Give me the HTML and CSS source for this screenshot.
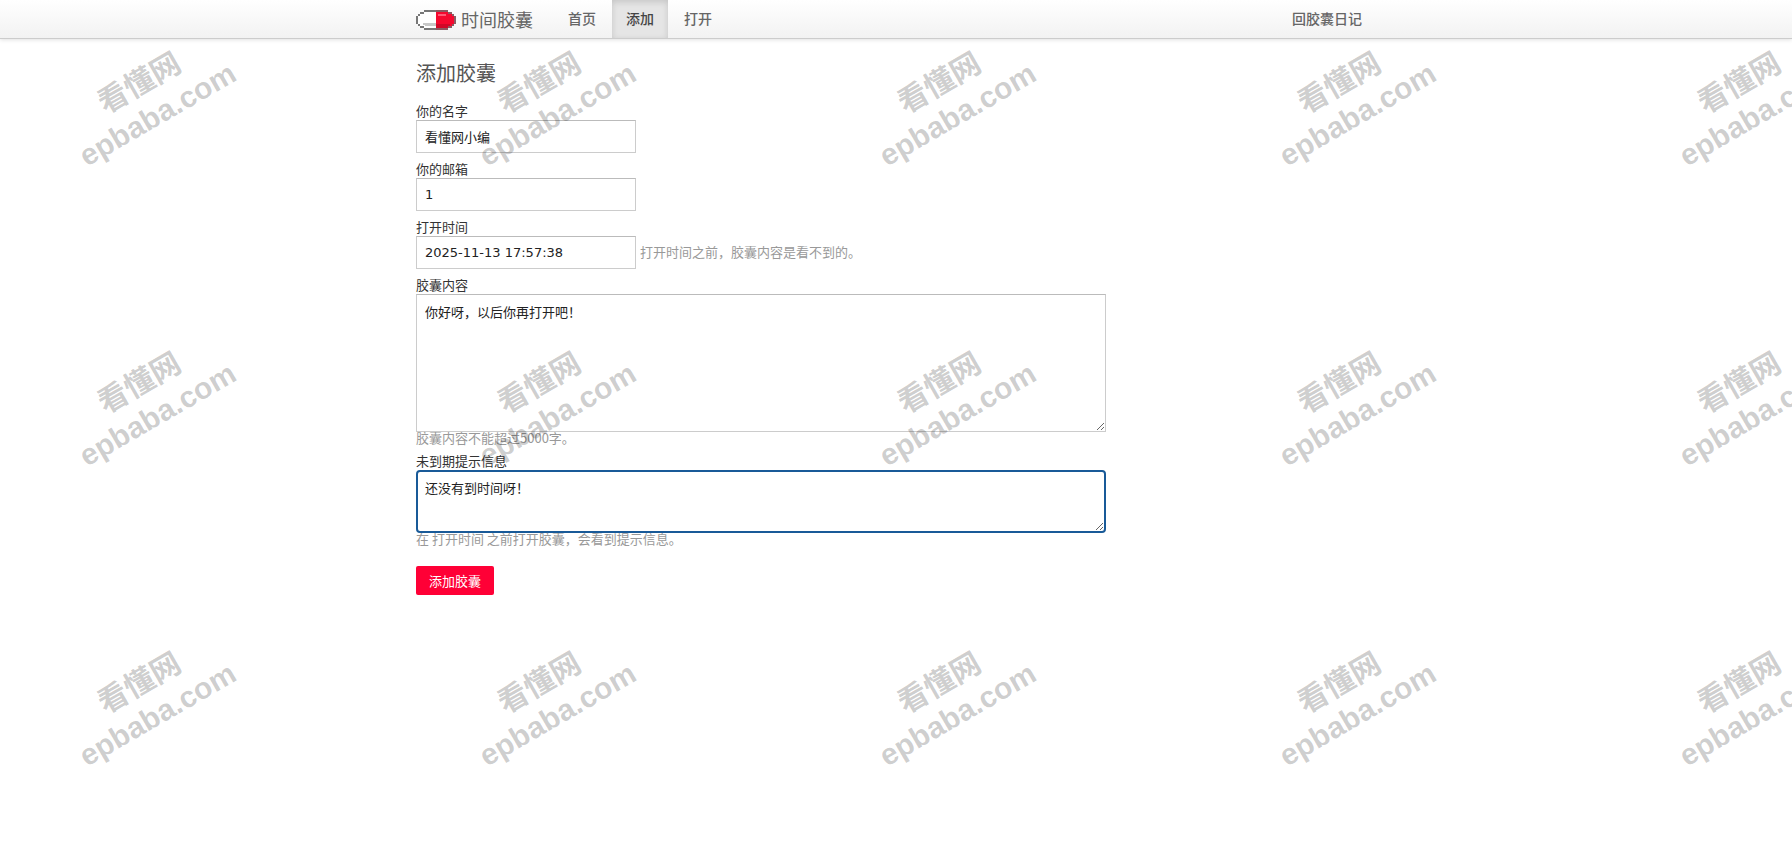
FILE: index.html
```html
<!DOCTYPE html>
<html lang="zh-CN">
<head>
    <meta charset="UTF-8">
    <meta name="viewport" content="width=device-width, initial-scale=1.0">
    <title>时间胶囊</title>
    <link rel="stylesheet" href="styles.css">
</head>
<body>
    <header class="navbar">
        <div class="container navbar-inner">
            <a class="brand" href="#">
                <svg class="brand-icon" width="40" height="20" viewBox="0 0 40 20" shape-rendering="crispEdges" aria-hidden="true">
                    <path fill="#fff" d="M8 2h12v16H8v-2H4v-2H2V6h2V4h4z"/>
                    <path fill="#f5082e" d="M20 2h12v2h4v2h2v8h-2v2h-4v2H20z"/>
                    <path fill="#c8c8c8" d="M7 13h13v3H9v-1H7z"/>
                    <path fill="#d00828" d="M20 14h14v2h-2v2H20z"/>
                    <path fill="#ff5a76" d="M22 4h8v2h-8z"/>
                    <path fill="#777" d="M8 0h12v2H8zM4 2h4v2H4zM2 4h2v2H2zM0 6h2v8H0zM2 14h2v2H2zM4 16h4v2H4zM8 18h12v2H8z"/>
                    <path fill="#8c5a62" d="M20 0h12v2H20zM32 2h4v2h-4zM36 4h2v2h-2zM38 6h2v8h-2zM36 14h2v2h-2zM32 16h4v2h-4zM20 18h12v2H20z"/>
                </svg>
                时间胶囊
            </a>
            <nav class="nav">
                <a href="#">首页</a>
                <a class="active" href="#">添加</a>
                <a href="#">打开</a>
            </nav>
            <a class="nav-back" href="#">回胶囊日记</a>
        </div>
    </header>

    <main class="container">
        <h1>添加胶囊</h1>
        <form>
            <div class="field">
                <label for="name">你的名字</label>
                <input type="text" id="name" value="看懂网小编">
            </div>
            <div class="field">
                <label for="email">你的邮箱</label>
                <input type="text" id="email" value="1">
            </div>
            <div class="field">
                <label for="open-time">打开时间</label>
                <div class="field-row">
                    <input type="text" id="open-time" value="2025-11-13 17:57:38">
                    <span class="help">打开时间之前，胶囊内容是看不到的。</span>
                </div>
            </div>
            <div class="field">
                <label for="content">胶囊内容</label>
                <textarea class="content" id="content">你好呀，以后你再打开吧！</textarea>
                <p class="help">胶囊内容不能超过5000字。</p>
            </div>
            <div class="field">
                <label for="tip">未到期提示信息</label>
                <textarea class="tip" id="tip">还没有到时间呀！</textarea>
                <p class="help">在 打开时间 之前打开胶囊，会看到提示信息。</p>
            </div>
            <button class="btn" type="submit">添加胶囊</button>
        </form>
    </main>

    <!-- Watermark layer over the whole page -->
    <div class="watermark" aria-hidden="true">
        <div class="mark">看懂网<br>epbaba.com</div>
        <div class="mark">看懂网<br>epbaba.com</div>
        <div class="mark">看懂网<br>epbaba.com</div>
        <div class="mark">看懂网<br>epbaba.com</div>
        <div class="mark">看懂网<br>epbaba.com</div>
        <div class="mark">看懂网<br>epbaba.com</div>
        <div class="mark">看懂网<br>epbaba.com</div>
        <div class="mark">看懂网<br>epbaba.com</div>
        <div class="mark">看懂网<br>epbaba.com</div>
        <div class="mark">看懂网<br>epbaba.com</div>
        <div class="mark">看懂网<br>epbaba.com</div>
        <div class="mark">看懂网<br>epbaba.com</div>
        <div class="mark">看懂网<br>epbaba.com</div>
        <div class="mark">看懂网<br>epbaba.com</div>
        <div class="mark">看懂网<br>epbaba.com</div>
    </div>
</body>
</html>
```
FILE: styles.css
```css
* {
    box-sizing: border-box;
}

body {
    margin: 0;
    font-family: "Noto Sans CJK SC", sans-serif;
    font-size: 13px;
    line-height: 18px;
    color: #333;
    background-color: #fff;
}

.container {
    max-width: 960px;
    margin: 0 auto;
}

.navbar {
    background: linear-gradient(#fff, #f2f2f2);
    border-bottom: 1px solid #ccc;
    box-shadow: 0 1px 4px rgba(0, 0, 0, 0.12);
}

.navbar-inner {
    display: flex;
    height: 38px;
    line-height: 36px;
}

.navbar a {
    color: #666;
    text-decoration: none;
}

.brand {
    display: flex;
    align-items: center;
    gap: 5px;
    margin-right: 21px;
    font-size: 18px;
}

.brand-icon {
    margin-top: 2px;
}

.nav {
    display: flex;
    gap: 2px;
}

.nav a,
.nav-back {
    padding: 0 14px;
    font-size: 14px;
    font-weight: 500;
}

.navbar .active {
    color: #444;
    background-color: #e5e5e5;
    box-shadow: inset 0 2px 6px rgba(0, 0, 0, 0.14);
}

.nav-back {
    margin-left: auto;
}

h1 {
    margin: 22px 0 17px;
    font-size: 20px;
    font-weight: 400;
    line-height: 24px;
    color: #555;
}

.field {
    margin-bottom: 7px;
}

label {
    display: block;
}

.field-row {
    display: flex;
    align-items: center;
    gap: 4px;
}

input,
textarea {
    display: block;
    padding: 8px;
    border: 1px solid #ccc;
    border-top-color: #bbb;
    background-color: #fff;
    color: #222;
    font-family: "DejaVu Sans", "Noto Sans CJK SC", sans-serif;
    font-size: 13px;
    line-height: 18px;
}

input {
    width: 220px;
    height: 33px;
}

textarea {
    width: 100%;
    max-width: 690px;
    padding-top: 9px;
    resize: both;
}

.content {
    height: 138px;
}

.tip {
    height: 63px;
    border: 2px solid #195a98;
    border-radius: 4px;
    padding: 8px 7px 7px;
    outline: none;
}

.help {
    margin: 0;
    padding-bottom: 2px;
    line-height: 11px;
    color: #999;
}

.btn {
    margin-top: 13px;
    padding: 0 13px;
    height: 29px;
    border: none;
    border-radius: 2px;
    background-color: #ff0036;
    color: #fff;
    font-family: inherit;
    font-size: 13px;
    cursor: pointer;
}

.btn:hover {
    background-color: #e00030;
}

.watermark {
    position: absolute;
    inset: 0;
    display: grid;
    grid-template-columns: repeat(5, 298px);
    grid-auto-rows: 198px;
    align-content: start;
    gap: 102px;
    overflow: hidden;
    pointer-events: none;
}

.mark {
    place-self: center;
    transform: rotate(-30deg);
    text-align: center;
    font-family: "Liberation Sans", "Noto Sans CJK SC", sans-serif;
    font-size: 30px;
    font-weight: bold;
    line-height: 36px;
    color: rgba(0, 0, 0, 0.2);
}
```
